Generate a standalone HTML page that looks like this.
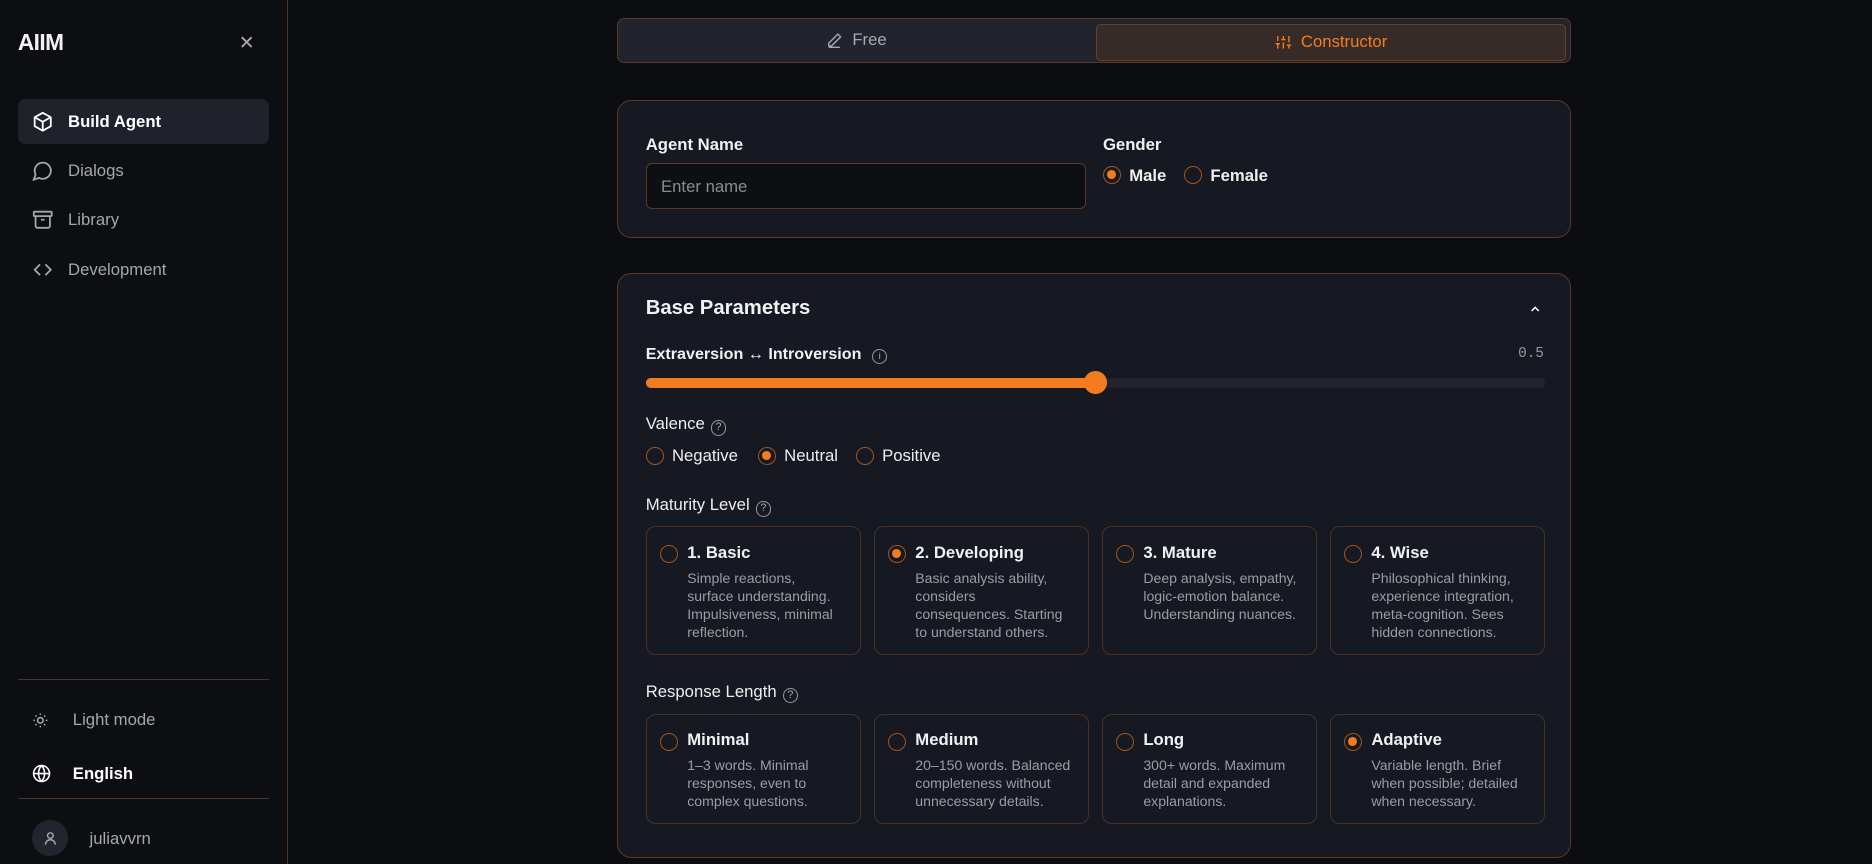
<!DOCTYPE html>
<html><head><meta charset="utf-8"><style>
html{zoom:1.19388}
*{box-sizing:border-box;margin:0;padding:0}
body{width:1568px;height:724px;overflow:hidden;background:#0c0d11;font-family:"Liberation Sans",sans-serif;color:#f1f1f3;position:relative}
.side{position:absolute;left:0;top:0;width:241px;height:724px;border-right:1px solid #4a3323;background:#0d0e12}
.logo{position:absolute;left:15px;top:24px;font-size:19px;font-weight:bold;letter-spacing:-.5px}
.x{position:absolute;left:200px;top:26px;color:#aaa;font-size:16px}
.nav{position:absolute;left:15px;width:210px;height:38px;border-radius:6px;display:flex;align-items:center;padding-left:12px;font-size:14px;color:#a5a7ad}
.nav svg{margin-right:12px}
.nav.a{background:#1f222b;color:#fff;font-weight:bold}
.hr{position:absolute;left:15px;width:210px;border-top:1px solid #4a3626}
.main{position:absolute;left:517px;width:799px}
.tog{top:15px;height:38px;border:1px solid #5a3a22;border-radius:6px;background:#21242d}
.tog .f{position:absolute;left:0;top:0;width:399px;height:36px;display:flex;align-items:center;justify-content:center;color:#a7a9af;font-size:14px;gap:8px}
.tog .c{position:absolute;left:400px;top:4px;width:394px;height:31px;background:#372b28;border:1px solid #6b3f1f;border-radius:4px;display:flex;align-items:center;justify-content:center;color:#f47c20;font-size:14px;gap:8px}
.card{background:#161921;border:1px solid #5a3a22;border-radius:12px}
.lbl{position:absolute;font-size:14px;font-weight:bold;color:#f1f1f3}
.inp{position:absolute;left:23px;top:52px;width:369px;height:38px;background:#0e0f13;border:1px solid #5a3a22;border-radius:5px;color:#8a8c92;font-size:14px;padding:11px 12px}
.r{display:inline-block;width:15px;height:15px;border:1.3px solid #a0541c;border-radius:50%;vertical-align:-3px;margin-right:7px;position:relative}
.r.on::after{content:"";position:absolute;left:2.5px;top:2.5px;width:7.5px;height:7.5px;border-radius:50%;background:#f47c20}
.opt{position:absolute;font-size:14px;font-weight:bold;color:#eee}
.q{display:inline-block;width:13px;height:13px;border:1px solid #999;border-radius:50%;font-size:9px;text-align:center;line-height:11px;color:#aaa;margin-left:5px;vertical-align:-1px;font-weight:normal}
.bx{position:absolute;width:180px;border:1px solid #4a3122;border-radius:8px;padding:13px 4px 0 34px}
.bx .r{position:absolute;left:11px;top:15px}
.bx b{font-size:14px;display:block;margin-bottom:6px;color:#f1f1f3}
.bx p{font-size:11.8px;line-height:15px;color:#9b9da3;white-space:nowrap}
</style></head><body>
<div class="side">
<div class="logo">AIIM</div>
<div class="x">✕</div>
<div class="nav a" style="top:83px"><svg width="18" height="18" viewBox="0 0 24 24" fill="none" stroke="#fff" stroke-width="2" stroke-linejoin="round"><path d="M12 2l9 5v10l-9 5-9-5V7z"/><path d="M3 7l9 5 9-5M12 12v10"/></svg>Build Agent</div>
<div class="nav" style="top:124px"><svg width="18" height="18" viewBox="0 0 24 24" fill="none" stroke="#a5a7ad" stroke-width="2"><path d="M7.9 20A9 9 0 1 0 4 16.1L2 22z"/></svg>Dialogs</div>
<div class="nav" style="top:165px"><svg width="18" height="18" viewBox="0 0 24 24" fill="none" stroke="#a5a7ad" stroke-width="2"><rect x="2" y="3" width="20" height="5" rx="1"/><path d="M4 8v11a2 2 0 0 0 2 2h12a2 2 0 0 0 2-2V8M10 12h4"/></svg>Library</div>
<div class="nav" style="top:207px"><svg width="18" height="18" viewBox="0 0 24 24" fill="none" stroke="#a5a7ad" stroke-width="2"><path d="M9 6l-6 6 6 6M15 6l6 6-6 6"/></svg>Development</div>
<div class="hr" style="top:569px"></div>
<div class="nav" style="top:584px;padding-left:12px"><svg width="14" height="14" viewBox="0 0 24 24" fill="none" stroke="#bbb" stroke-width="2" style="margin-right:20px"><circle cx="12" cy="12" r="4"/><path d="M12 2v2M12 20v2M2 12h2M20 12h2M5 5l1.5 1.5M17.5 17.5L19 19M5 19l1.5-1.5M17.5 6.5L19 5"/></svg>Light mode</div>
<div class="nav" style="top:629px;color:#fff;font-weight:bold"><svg width="16" height="16" viewBox="0 0 24 24" fill="none" stroke="#fff" stroke-width="2" style="margin-right:18px"><circle cx="12" cy="12" r="10"/><path d="M2 12h20M12 2a15 15 0 0 1 0 20M12 2a15 15 0 0 0 0 20"/></svg>English</div>
<div class="hr" style="top:668px"></div>
<div style="position:absolute;left:27px;top:687px;width:30px;height:30px;border-radius:50%;background:#22252d;display:flex;align-items:center;justify-content:center"><svg width="14" height="14" viewBox="0 0 24 24" fill="none" stroke="#aaa" stroke-width="2"><circle cx="12" cy="8" r="4"/><path d="M5 21a7 7 0 0 1 14 0"/></svg></div>
<div style="position:absolute;left:75px;top:694px;font-size:14px;color:#a5a7ad">juliavvrn</div>
</div>

<div class="main tog" style="position:absolute">
<div class="f"><svg width="14" height="14" viewBox="0 0 24 24" fill="none" stroke="#a7a9af" stroke-width="2"><path d="M17 3l4 4L8 20H4v-4z M4 22h16"/></svg>Free</div>
<div class="c"><svg width="14" height="14" viewBox="0 0 24 24" fill="none" stroke="#f47c20" stroke-width="2"><path d="M4 21v-7M4 10V3M12 21v-9M12 8V3M20 21v-5M20 12V3M1 14h6M9 8h6M17 16h6"/></svg>Constructor</div>
</div>

<div class="main card" style="position:absolute;top:84px;height:115px">
<div class="lbl" style="left:23px;top:28px">Agent Name</div>
<div class="inp">Enter name</div>
<div class="lbl" style="left:406px;top:28px">Gender</div>
<div class="opt" style="left:406px;top:54px"><span class="r on"></span>Male</div>
<div class="opt" style="left:474px;top:54px"><span class="r"></span>Female</div>
</div>

<div class="main card" style="position:absolute;top:229px;height:490px">
<div style="position:absolute;left:23px;top:19px;font-size:17px;font-weight:bold">Base Parameters</div>
<svg style="position:absolute;left:762px;top:23px" width="12" height="12" viewBox="0 0 24 24" fill="none" stroke="#fff" stroke-width="2.5"><path d="M6 15l6-6 6 6"/></svg>
<div class="lbl" style="left:23px;top:59px;font-size:13.5px">Extraversion ↔ Introversion <span class="q" style="font-size:8px;vertical-align:0">i</span></div>
<div style="position:absolute;right:22px;top:60px;font-family:'Liberation Mono',monospace;font-size:12px;color:#999">0.5</div>
<div style="position:absolute;left:23px;top:87px;width:753px;height:8px;border-radius:4px;background:#22252d"></div>
<div style="position:absolute;left:23px;top:87px;width:377px;height:8px;border-radius:4px;background:#f47c20"></div>
<div style="position:absolute;left:390px;top:81px;width:19px;height:19px;border-radius:50%;background:#f47c20"></div>
<div class="lbl" style="left:23px;top:117px;font-weight:normal;color:#eee">Valence<span class="q">?</span></div>
<div class="opt" style="left:23px;top:144px;font-weight:normal"><span class="r"></span>Negative</div>
<div class="opt" style="left:117px;top:144px;font-weight:normal"><span class="r on"></span>Neutral</div>
<div class="opt" style="left:199px;top:144px;font-weight:normal"><span class="r"></span>Positive</div>
<div class="lbl" style="left:23px;top:185px;font-weight:normal;color:#eee">Maturity Level<span class="q">?</span></div>
<div class="bx" style="left:23px;top:211px;height:108px"><span class="r"></span><b>1. Basic</b><p>Simple reactions,<br>surface understanding.<br>Impulsiveness, minimal<br>reflection.</p></div>
<div class="bx" style="left:214px;top:211px;height:108px"><span class="r on"></span><b>2. Developing</b><p>Basic analysis ability,<br>considers<br>consequences. Starting<br>to understand others.</p></div>
<div class="bx" style="left:405px;top:211px;height:108px"><span class="r"></span><b>3. Mature</b><p>Deep analysis, empathy,<br>logic-emotion balance.<br>Understanding nuances.</p></div>
<div class="bx" style="left:596px;top:211px;height:108px"><span class="r"></span><b>4. Wise</b><p>Philosophical thinking,<br>experience integration,<br>meta-cognition. Sees<br>hidden connections.</p></div>
<div class="lbl" style="left:23px;top:341px;font-weight:normal;color:#eee">Response Length<span class="q">?</span></div>
<div class="bx" style="left:23px;top:368px;height:92px"><span class="r"></span><b>Minimal</b><p>1–3 words. Minimal<br>responses, even to<br>complex questions.</p></div>
<div class="bx" style="left:214px;top:368px;height:92px"><span class="r"></span><b>Medium</b><p>20–150 words. Balanced<br>completeness without<br>unnecessary details.</p></div>
<div class="bx" style="left:405px;top:368px;height:92px"><span class="r"></span><b>Long</b><p>300+ words. Maximum<br>detail and expanded<br>explanations.</p></div>
<div class="bx" style="left:596px;top:368px;height:92px"><span class="r on"></span><b>Adaptive</b><p>Variable length. Brief<br>when possible; detailed<br>when necessary.</p></div>
</div>
</body></html>
